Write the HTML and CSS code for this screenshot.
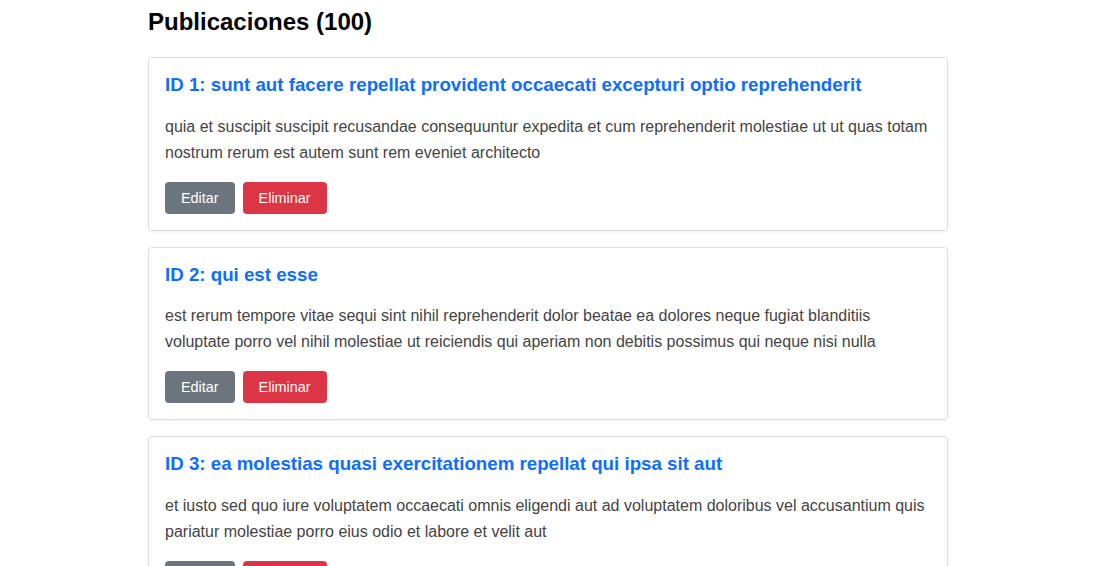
FILE: index.html
```html
<!DOCTYPE html>
<html lang="es">
<head>
<meta charset="utf-8">
<title>Publicaciones</title>
<link rel="stylesheet" href="styles.css">
</head>
<body>
<main class="container">
  <h2 class="page-title">Publicaciones (100)</h2>
  <div class="posts">
    <article class="card">
      <h3 class="card-title">ID 1: sunt aut facere repellat provident occaecati excepturi optio reprehenderit</h3>
      <p class="card-body">quia et suscipit suscipit recusandae consequuntur expedita et cum reprehenderit molestiae ut ut quas totam nostrum rerum est autem sunt rem eveniet architecto</p>
      <div class="actions">
        <button class="btn btn-edit">Editar</button>
        <button class="btn btn-delete">Eliminar</button>
      </div>
    </article>
    <article class="card">
      <h3 class="card-title">ID 2: qui est esse</h3>
      <p class="card-body">est rerum tempore vitae sequi sint nihil reprehenderit dolor beatae ea dolores neque fugiat blanditiis voluptate porro vel nihil molestiae ut reiciendis qui aperiam non debitis possimus qui neque nisi nulla</p>
      <div class="actions">
        <button class="btn btn-edit">Editar</button>
        <button class="btn btn-delete">Eliminar</button>
      </div>
    </article>
    <article class="card">
      <h3 class="card-title">ID 3: ea molestias quasi exercitationem repellat qui ipsa sit aut</h3>
      <p class="card-body">et iusto sed quo iure voluptatem occaecati omnis eligendi aut ad voluptatem doloribus vel accusantium quis pariatur molestiae porro eius odio et labore et velit aut</p>
      <div class="actions">
        <button class="btn btn-edit">Editar</button>
        <button class="btn btn-delete">Eliminar</button>
      </div>
    </article>
  </div>
</main>
</body>
</html>
```

FILE: styles.css
```css
html, body {
  margin: 0;
  padding: 0;
  background: #fff;
}
body {
  font-family: "Liberation Sans", Arial, sans-serif;
  color: #000;
  padding: 8px 2px 0 0;
}
.container {
  width: 800px;
  margin: 0 auto;
}
.page-title {
  margin: 0 0 21px;
  font-size: 24px;
  font-weight: bold;
  line-height: 28px;
}
.posts {
  display: flex;
  flex-direction: column;
  gap: 16px;
}
.card {
  border: 1px solid #ddd;
  border-radius: 4px;
  padding: 16px;
  box-shadow: 0 1px 3px rgba(0,0,0,0.06);
  background: #fff;
}
.card-title {
  margin: 0 0 18.5px;
  font-size: 18.72px;
  line-height: 21px;
  font-weight: bold;
  color: #0d6efd;
}
.card-body {
  margin: 0 0 16px;
  font-size: 16px;
  line-height: 26px;
  color: #444;
}
.actions {
  display: flex;
  gap: 8px;
}
.btn {
  font-family: "Liberation Sans", Arial, sans-serif;
  font-size: 14.4px;
  line-height: 16px;
  padding: 8px 16px;
  border: none;
  border-radius: 4px;
  color: #fff;
  cursor: pointer;
}
.btn-edit { background: #6c757d; }
.btn-delete { background: #dc3545; }
```
